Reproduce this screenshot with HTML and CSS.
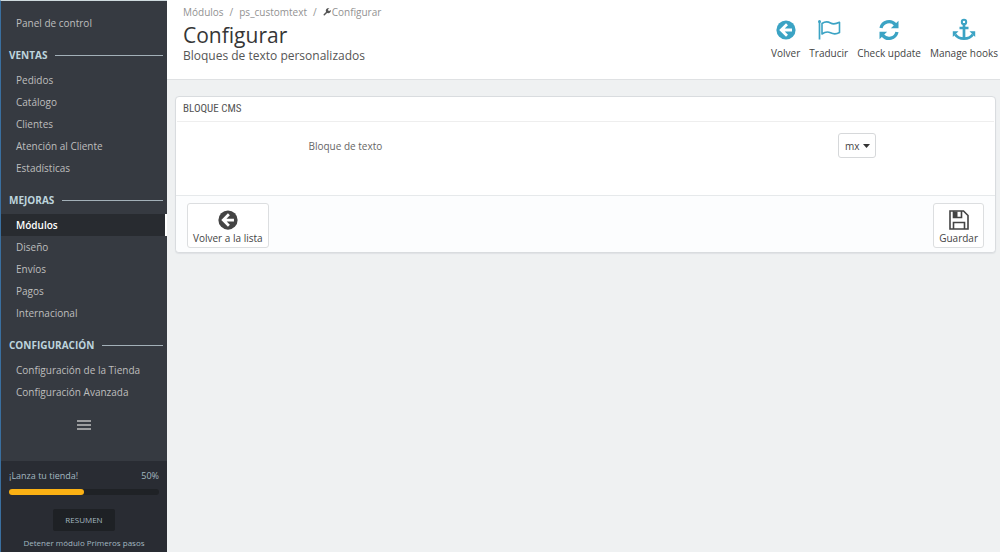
FILE: index.html
```html
<!DOCTYPE html>
<html lang="es">
<head>
<meta charset="utf-8">
<meta name="viewport" content="width=device-width, initial-scale=1">
<title>Configurar • Bloques de texto personalizados</title>
<link rel="stylesheet" href="styles.css">
</head>
<body>
<div class="app">
  <aside class="sidebar">
    <nav class="menu">
      <a class="menu-link" href="#">Panel de control</a>
      <h2 class="menu-title">VENTAS</h2>
      <a class="menu-link" href="#">Pedidos</a>
      <a class="menu-link" href="#">Catálogo</a>
      <a class="menu-link" href="#">Clientes</a>
      <a class="menu-link" href="#">Atención al Cliente</a>
      <a class="menu-link" href="#">Estadísticas</a>
      <h2 class="menu-title">MEJORAS</h2>
      <a class="menu-link active" href="#" aria-current="page">Módulos</a>
      <a class="menu-link" href="#">Diseño</a>
      <a class="menu-link" href="#">Envíos</a>
      <a class="menu-link" href="#">Pagos</a>
      <a class="menu-link" href="#">Internacional</a>
      <h2 class="menu-title">CONFIGURACIÓN</h2>
      <a class="menu-link" href="#">Configuración de la Tienda</a>
      <a class="menu-link" href="#">Configuración Avanzada</a>
    </nav>
    <button class="collapse" type="button" aria-label="Contraer menú">
      <svg width="16" height="12" viewBox="0 0 16 12"><path d="M1 2h14M1 6h14M1 10h14" stroke="currentColor" stroke-width="1.6"/></svg>
    </button>
    <section class="onboarding">
      <div class="onboarding-head"><span>¡Lanza tu tienda!</span><span>50%</span></div>
      <div class="progress"><div class="progress-bar" style="width:50%"></div></div>
      <button class="resume" type="button">RESUMEN</button>
      <a class="stop" href="#">Detener módulo Primeros pasos</a>
    </section>
  </aside>

  <div class="content">
    <header class="page-head">
      <div class="page-info">
        <nav class="breadcrumb">
          <a href="#">Módulos</a><span>/</span><a href="#">ps_customtext</a><span>/</span>
          <a class="current" href="#"><svg width="8" height="8" viewBox="0 0 16 16"><path d="M2.500 13.500 8.500 7.500" stroke="#555" stroke-width="3" stroke-linecap="round"/><path d="M15.500 4.200 12.500 6 10.200 4.800V2.600L13 .9A5 5 0 1 0 15.500 4.200Z" fill="#555"/></svg>Configurar</a>
        </nav>
        <h1 class="title">Configurar</h1>
        <p class="subtitle">Bloques de texto personalizados</p>
      </div>
      <div class="toolbar">
        <a class="tool" href="#">
          <svg width="24" height="24" viewBox="0 0 24 24"><circle cx="12" cy="12" r="9.600" fill="currentColor"/><path d="M13 6.300 7.200 12 13 17.700M8 12H18" fill="none" stroke="#fff" stroke-width="2.800"/></svg>
          Volver</a>
        <a class="tool" href="#">
          <svg width="24" height="24" viewBox="0 0 24 24" fill="none" stroke="currentColor"><path d="M2.500 4V21.500" stroke-width="1.700"/><circle cx="2.500" cy="3.500" r="1.500" fill="currentColor" stroke="none"/><path d="M5 5.500C8.500 3 11 3.500 13.500 5S19 6 22.500 4.300V14.500C19 16.500 16 16 13.500 14.800S8.500 13.500 5 16Z" stroke-width="1.600" stroke-linejoin="round"/></svg>
          Traducir</a>
        <a class="tool" href="#">
          <svg width="24" height="24" viewBox="0 0 24 24"><path d="M4 10A8.200 8.200 0 0 1 18.300 6.600M20 14A8.200 8.200 0 0 1 5.700 17.400" fill="none" stroke="currentColor" stroke-width="3.300"/><path d="M21.500 2.700V10.300H13.900ZM2.500 21.300V13.700H10.100Z" fill="currentColor"/></svg>
          Check update</a>
        <a class="tool" href="#">
          <svg width="24" height="24" viewBox="0 0 24 24"><circle cx="12" cy="3.900" r="2.200" fill="none" stroke="currentColor" stroke-width="2"/><path d="M12 6.500V20.500M7.500 10H16.500" stroke="currentColor" stroke-width="2.700"/><path d="M3.200 16.500C5 19.300 8.200 20.700 12 20.700S19 19.300 20.800 16.500" fill="none" stroke="currentColor" stroke-width="2.700"/><path d="M.8 13.300H6.500L.8 19ZM23.200 13.300H17.500L23.200 19Z" fill="currentColor"/></svg>
          Manage hooks</a>
      </div>
    </header>

    <main class="page-body">
      <form class="panel">
        <h2 class="panel-title">BLOQUE CMS</h2>
        <div class="panel-body">
          <label class="field-label" for="lang">Bloque de texto</label>
          <div class="lang">
            <select class="lang-select" id="lang"><option>mx</option></select>
            <svg class="caret" width="7" height="4" viewBox="0 0 7 4"><path d="M0 0H7L3.500 4Z" fill="#333"/></svg>
          </div>
        </div>
        <footer class="panel-foot">
          <button class="btn" type="button">
            <svg width="22" height="22" viewBox="0 0 24 24"><circle cx="12" cy="12" r="10.500" fill="currentColor"/><path d="M13 5.800 6.800 12 13 18.200M8 12H18.500" fill="none" stroke="#fff" stroke-width="3"/></svg>
            Volver a la lista</button>
          <button class="btn" type="submit">
            <svg width="22" height="22" viewBox="0 0 22 22" fill="none" stroke="currentColor" stroke-width="1.600"><path d="M2 2H15.500L20 6.500V20H2Z"/><path d="M5.500 20V13.500H16.500V20M5.500 2V8.500H13.500V2"/><path d="M6 2.500H9.500V8H6Z" fill="currentColor" stroke="none"/></svg>
            Guardar</button>
        </footer>
      </form>
    </main>
  </div>
</div>
</body>
</html>
```
FILE: styles.css
```css
* { box-sizing: border-box; }
body {
  margin: 0;
  background: #eff1f2;
  color: #555;
  font: 10px/14px "Open Sans", "Noto Sans", sans-serif;
}
a { color: inherit; text-decoration: none; }
button { font: inherit; cursor: pointer; }
h1, h2, p { margin: 0; }
svg { display: block; flex: none; }

.app { display: flex; min-height: 100vh; }

.sidebar {
  display: flex;
  flex-direction: column;
  flex: none;
  width: 167px;
  background: #363a41;
  border-left: 1px solid #3a6f9f;
  border-top: 1px solid #cfdade;
  color: #bebebe;
}
.menu { padding-top: 11px; }
.menu-link { display: block; padding: 0 15px; line-height: 22px; }
.menu-link.active {
  background: #282b30;
  border-right: 2px solid #fff;
  color: #fff;
  font-weight: 600;
}
.menu-title {
  display: flex;
  align-items: center;
  gap: 8px;
  margin: 11px 4px 4px 8px;
  color: #bdd4dd;
  font-size: 10px;
  line-height: 20px;
  font-weight: 700;
}
.menu-title::after { content: ""; flex: 1; height: 1px; background: #a3b0b8; }
.collapse {
  align-self: center;
  margin: 16px 0 30px;
  padding: 0;
  border: 0;
  background: none;
  color: #bebebe;
}
.onboarding {
  display: flex;
  flex-direction: column;
  flex: 1;
  padding: 8px;
  background: #292c33;
  color: #a3b8c0;
  font-size: 9px;
}
.onboarding-head { display: flex; justify-content: space-between; }
.progress { height: 6px; margin-top: 6px; border-radius: 3px; background: #1f2226; }
.progress-bar { height: 6px; border-radius: 3px; background: #fbb114; }
.resume {
  align-self: center;
  margin-top: 14px;
  padding: 4px 12px;
  border: 0;
  border-radius: 2px;
  background: #1e2125;
  color: #a3b8c0;
  font-size: 8px;
}
.stop { align-self: center; margin-top: 5px; font-size: 8px; }

.content { flex: 1; min-width: 0; }
.page-head {
  display: flex;
  justify-content: space-between;
  padding: 5px 2px 16px 16px;
  background: #fff;
  border-bottom: 1px solid #dfe1e3;
}
.breadcrumb { display: flex; gap: 6px; color: #929292; }
.current { display: flex; align-items: center; gap: 1px; }
.title { margin-top: 2px; color: #363636; font-size: 21px; line-height: 28px; font-weight: 400; }
.subtitle { color: #555; font-size: 12px; line-height: 14px; }
.toolbar { display: flex; gap: 9px; padding-top: 13px; }
.tool {
  display: flex;
  flex-direction: column;
  align-items: center;
  gap: 4px;
  color: #444;
  white-space: nowrap;
}
.tool svg { color: #3ba3c4; }

.page-body { padding: 16px 4px 16px 8px; }
.panel {
  background: #fff;
  border: 1px solid #d9dcdf;
  border-radius: 4px;
  box-shadow: 0 1px 1px #dfe2e5;
}
.panel-title {
  margin: 0 1px;
  padding: 0 6px;
  border-bottom: 1px solid #eee;
  color: #555;
  font: 11px/24px "Ubuntu Condensed", "Roboto Condensed", Roboto, sans-serif;
}
.panel-body {
  display: grid;
  grid-template-columns: 4fr 9fr 3fr;
  align-items: center;
  padding: 11px 7px 37px;
}
.field-label { padding-right: 2px; color: #666; font-size: 10px; text-align: right; }
.lang { position: relative; grid-column: 3; justify-self: start; margin-left: 1px; }
.lang-select {
  display: block;
  height: 25px;
  padding: 0 15px 0 6px;
  appearance: none;
  border: 1px solid #d6d8da;
  border-radius: 3px;
  background: #fff;
  color: #444;
  font: inherit;
}
.caret { position: absolute; right: 6px; top: 11px; pointer-events: none; }
.panel-foot {
  display: flex;
  justify-content: space-between;
  padding: 7px 11px 4px;
  border-top: 1px solid #e6e9eb;
  border-radius: 0 0 4px 4px;
  background: #fcfdfe;
}
.btn {
  display: flex;
  flex-direction: column;
  align-items: center;
  padding: 5px 5px 2px;
  border: 1px solid #dcdee0;
  border-radius: 3px;
  background: #fff;
  color: #444;
}
```
